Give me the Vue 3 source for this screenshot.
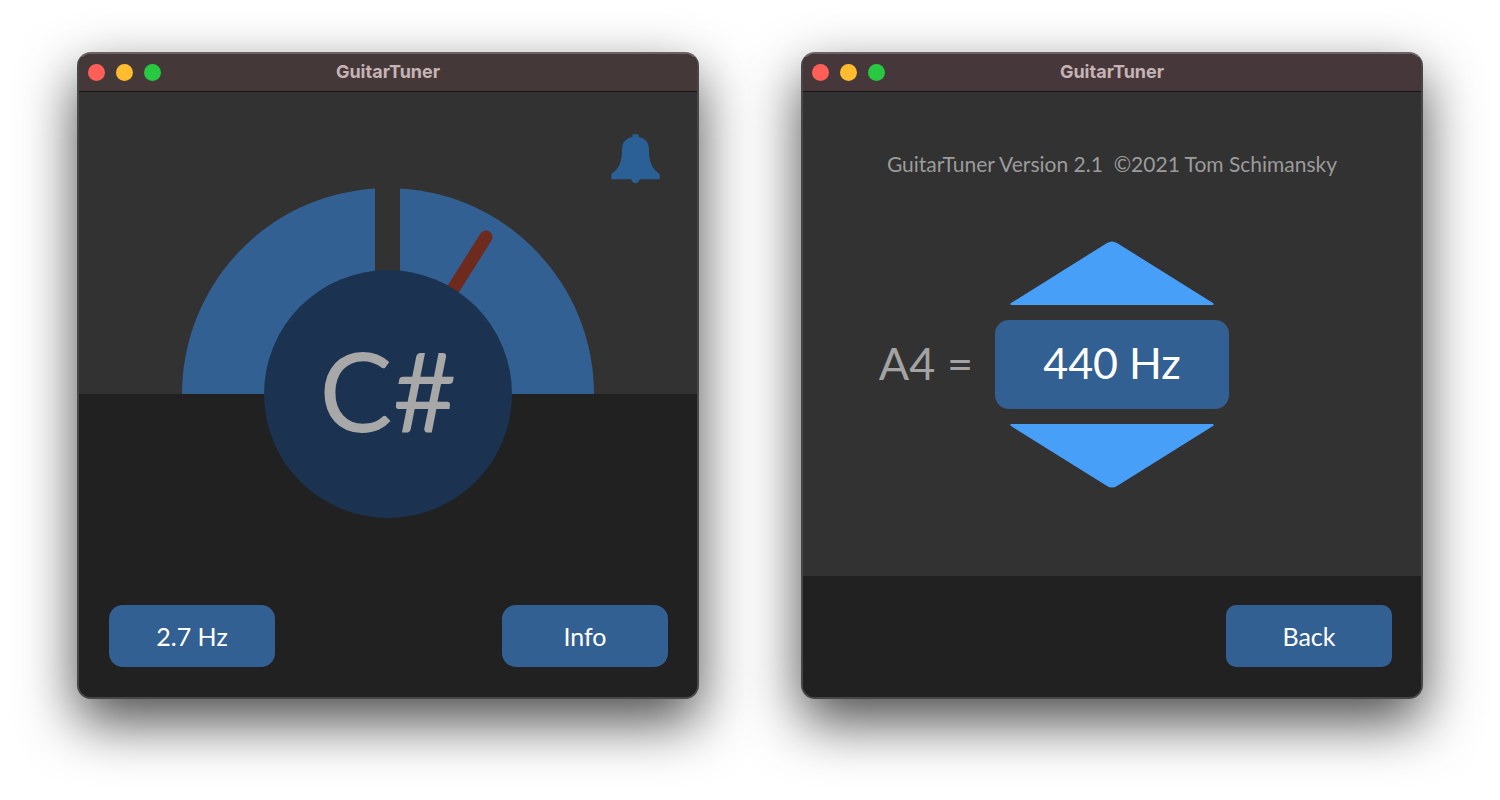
<script setup>
import { ref } from 'vue'

const note = ref('C#')
const deviation = ref('2.7 Hz')
const pitch = ref(440)
const lights = [
  { name: 'Close', tone: 'red' },
  { name: 'Minimize', tone: 'yellow' },
  { name: 'Zoom', tone: 'green' },
]
</script>

<template>
  <main class="desktop">
    <section class="window">
      <header class="titlebar">
        <div class="lights">
          <button v-for="l in lights" :key="l.name" type="button" class="light" :class="l.tone" :aria-label="l.name"></button>
        </div>
        <h1 class="title">GuitarTuner</h1>
      </header>
      <div class="tuner">
        <button type="button" class="bell" aria-label="Reference tone">
          <svg viewBox="0 0 146 148" aria-hidden="true">
            <path d="M64 1H82V9C100 12 113 24 113 44C113 80 121 104 145 119V135H86C84 142 79 147 73 147S62 142 60 135H1V119C25 104 33 80 33 44C33 24 46 12 64 9Z" fill="#2a6096" />
          </svg>
        </button>
        <svg class="dial" viewBox="0 0 412 330" role="img" :aria-label="note">
          <path d="M193 0.4A206 206 0 0 0 0 206H193Z" fill="#336092" />
          <path d="M218 0.4A206 206 0 0 1 412 206H218Z" fill="#336092" />
          <path d="M205 206L304 49" stroke="#6d2a1d" stroke-width="13" stroke-linecap="round" />
          <circle cx="206" cy="206" r="124" fill="#1b3351" />
          <text x="206" y="244" text-anchor="middle" class="note">{{ note }}</text>
        </svg>
        <div class="actions split">
          <button type="button" class="pill">{{ deviation }}</button>
          <button type="button" class="pill">Info</button>
        </div>
      </div>
    </section>

    <section class="window">
      <header class="titlebar plum">
        <div class="lights">
          <button v-for="l in lights" :key="l.name" type="button" class="light" :class="l.tone" :aria-label="l.name"></button>
        </div>
        <h1 class="title">GuitarTuner</h1>
      </header>
      <div class="settings">
        <p class="version">GuitarTuner Version 2.1&nbsp; ©2021 Tom Schimansky</p>
        <div class="calibration">
          <label class="a4" for="pitch">A4 =</label>
          <div class="stepper">
            <button type="button" class="arrow" aria-label="Raise pitch" @click="pitch++">
              <svg viewBox="0 0 204 64" aria-hidden="true">
                <path d="M97 2Q102 -1 107 2L203 62Q205 64 202 64H2Q-1 64 1 62Z" fill="#489ff8" />
              </svg>
            </button>
            <output id="pitch" class="value">{{ pitch }} Hz</output>
            <button type="button" class="arrow" aria-label="Lower pitch" @click="pitch--">
              <svg viewBox="0 0 204 64" aria-hidden="true">
                <path d="M97 62Q102 65 107 62L203 2Q205 0 202 0H2Q-1 0 1 2Z" fill="#489ff8" />
              </svg>
            </button>
          </div>
        </div>
        <div class="actions strip">
          <button type="button" class="pill tight">Back</button>
        </div>
      </div>
    </section>
  </main>
</template>

<style>
body {
  background: #fff;
}
</style>

<style scoped>
.desktop {
  display: grid;
  grid-template-columns: 1fr 1fr;
  gap: 102px;
  padding: 52px 77px 100px;
  font-family: Lato, "Liberation Sans", sans-serif;
}
button {
  border: 0;
  padding: 0;
  background: none;
  font: inherit;
  color: inherit;
  cursor: pointer;
}
svg {
  display: block;
  width: 100%;
}
.window {
  display: flex;
  flex-direction: column;
  box-sizing: border-box;
  min-height: 647px;
  border: 2px solid #474747;
  border-top-color: #6a6264;
  border-radius: 14px;
  overflow: hidden;
  background: #212121;
  box-shadow: 0 23px 56px rgba(0, 0, 0, 0.7);
}
.titlebar {
  display: grid;
  grid-template-columns: 1fr auto 1fr;
  align-items: center;
  height: 37px;
  padding: 0 9px;
  background: #453839;
  border-bottom: 1px solid #181213;
}
.plum {
  background: #45373a;
}
.lights {
  display: flex;
  gap: 11px;
}
.light {
  width: 17px;
  height: 17px;
  border-radius: 50%;
}
.red { background: #ff5f57; }
.yellow { background: #febc2e; }
.green { background: #28c840; }
.title {
  margin: 0;
  padding-bottom: 2px;
  font: 700 18px/24px Inter, "Liberation Sans", sans-serif;
  color: #c5b3b5;
}
.tuner,
.settings {
  flex: 1;
  display: flex;
  flex-direction: column;
}
.tuner {
  padding-top: 42px;
  background: linear-gradient(#323232 50%, #212121 50%);
}
.bell {
  align-self: flex-end;
  width: 49px;
  margin: 0 37px 4px 0;
}
.dial {
  width: calc(100% * 2 / 3);
  align-self: center;
}
.note {
  font-size: 110px;
  fill: #a8a8a8;
}
.actions {
  display: flex;
  margin-top: auto;
  padding: 29px 29px 30px 30px;
}
.split {
  justify-content: space-between;
}
.strip {
  justify-content: flex-end;
  background: #212121;
}
.pill {
  width: 166px;
  height: 62px;
  border-radius: 14px;
  background: #336092;
  color: #fff;
  font-size: 25px;
}
.tight {
  border-radius: 10px;
}
.settings {
  background: #323232;
}
.version {
  margin: 57px 0 62px;
  text-align: center;
  font-size: 21px;
  line-height: 30px;
  color: #9b9b9b;
}
.calibration {
  display: grid;
  grid-template-columns: 1fr 234px 1fr;
  column-gap: 22px;
  align-items: center;
}
.a4 {
  justify-self: end;
  padding-bottom: 4px;
  font-size: 45px;
  color: #a3a3a3;
}
.stepper {
  display: flex;
  flex-direction: column;
  align-items: center;
  gap: 15px;
}
.arrow {
  width: 204px;
}
.value {
  width: 100%;
  padding-bottom: 4px;
  line-height: 85px;
  border-radius: 14px;
  background: #336092;
  text-align: center;
  font-size: 43px;
  color: #fff;
}
</style>
